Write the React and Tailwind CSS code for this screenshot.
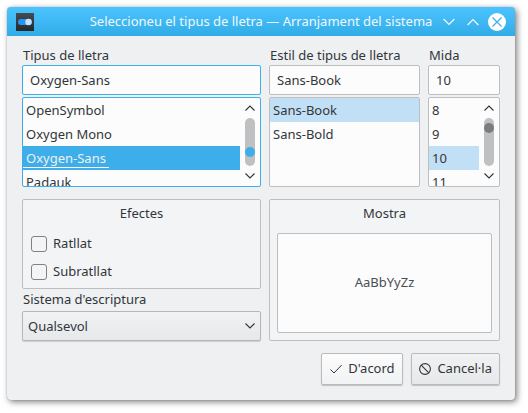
import { useState } from 'react';

function Chevron({ up = false, className = 'h-1.5 w-2.5' }) {
  return (
    <svg viewBox="0 0 10 6" className={className} fill="none" stroke="currentColor" aria-hidden="true">
      <path d={up ? 'M0.5 5.5 L5 1 L9.5 5.5' : 'M0.5 0.5 L5 5 L9.5 0.5'} strokeWidth="1.1" />
    </svg>
  );
}

function ScrollBar({ children }) {
  return (
    <div className="flex w-5 shrink-0 flex-col items-center justify-between py-[7px] text-[#31363b]" aria-hidden="true">
      <Chevron up />
      <div className="flex h-12 w-2.5 flex-col rounded-full bg-[#bfc0c1]">{children}</div>
      <Chevron />
    </div>
  );
}

function FontList({ label, items, selected, onSelect, focused = false, scroll }) {
  const highlight = focused ? 'bg-[#3daee9] text-[#eff0f1]' : 'bg-[#c2e0f5]';
  return (
    <div className={`mt-0.5 flex h-[90px] overflow-hidden rounded-xs border bg-[#fcfcfc] ${focused ? 'border-[#3daee9]' : 'border-[#bcbebf]'}`}>
      <ul role="listbox" aria-label={label} className="min-w-0 flex-1 overflow-hidden">
        {items.map((item) => (
          <li
            key={item}
            role="option"
            aria-selected={item === selected}
            onClick={() => onSelect(item)}
            className={`h-6 leading-6 ${item === selected ? highlight : ''}`}
          >
            <span className={`inline-block h-[22px] pr-[3px] pl-[3px] align-top ${focused && item === selected ? 'border-b border-[#fcfcfc]' : ''}`}>
              {item}
            </span>
          </li>
        ))}
      </ul>
      {scroll}
    </div>
  );
}

function Field({ id, label, value, onChange, focused = false, children }) {
  return (
    <div className="min-w-0">
      <label htmlFor={id} className="block h-[19px] pl-px leading-[19px]">{label}</label>
      <input
        id={id}
        value={value}
        onChange={(e) => onChange(e.target.value)}
        className={`block h-[30px] w-full rounded-xs border bg-[#fcfcfc] px-[7px] outline-none ${focused ? 'border-[#3daee9]' : 'border-[#bcbebf]'}`}
      />
      {children}
    </div>
  );
}

function Effect({ label }) {
  return (
    <label className="flex h-5 items-center gap-1.5">
      <input type="checkbox" className="size-4 appearance-none rounded-[3px] border border-[#7f8284] bg-[#f3f4f6] checked:bg-[#3daee9]" />
      {label}
    </label>
  );
}

export default function App() {
  const [family, setFamily] = useState('Oxygen-Sans');
  const [style, setStyle] = useState('Sans-Book');
  const [size, setSize] = useState('10');

  return (
    <div className="bg-white pt-[7px] pr-[13px] pb-[13px] pl-[7px] font-['Noto_Sans',sans-serif] text-[13px] text-[#31363b]">
      <main className="rounded-[4px] bg-[#eff0f1] shadow-[2px_2px_6px_rgba(0,0,0,0.5),0_0_1px_rgba(0,0,0,0.4)]">
        <header className="grid h-[29px] grid-cols-[66px_1fr_66px] items-center rounded-t-[4px] bg-linear-to-b from-[#4bc3ff] to-[#31ace6] px-[9px] text-[#eff8fd]">
          <svg viewBox="0 0 18 18" className="size-[18px]" aria-hidden="true">
            <defs>
              <linearGradient id="tile" x1="0" y1="0" x2="0" y2="1">
                <stop offset="0" stopColor="#454c52" />
                <stop offset="1" stopColor="#24282c" />
              </linearGradient>
            </defs>
            <rect width="18" height="18" rx="0.5" fill="url(#tile)" />
            <rect x="2" y="6" width="14" height="6" rx="3" fill="#2196f3" />
            <circle cx="12.5" cy="9" r="3.2" fill="#c5e4fa" />
          </svg>
          <h1 className="text-center whitespace-nowrap">Seleccioneu el tipus de lletra — Arranjament del sistema</h1>
          <div className="flex gap-1.5">
            <button aria-label="Minimitza" className="flex size-[18px] items-center justify-center"><Chevron className="h-2 w-3" /></button>
            <button aria-label="Maximitza" className="flex size-[18px] items-center justify-center"><Chevron up className="h-2 w-3" /></button>
            <button aria-label="Tanca" className="flex size-[18px] items-center justify-center rounded-full bg-white text-[#3daee9]">
              <svg viewBox="0 0 18 18" className="size-[18px]" stroke="currentColor" strokeWidth="1.2" aria-hidden="true">
                <path d="M4.5 4.5 L13.5 13.5 M13.5 4.5 L4.5 13.5" />
              </svg>
            </button>
          </div>
        </header>

        <div className="px-[15px] pt-2.5 pb-[15px]">
          <div className="grid grid-cols-[239fr_151fr_72fr] gap-x-2 gap-y-3">
            <Field id="family" label="Tipus de lletra" value={family} onChange={setFamily} focused>
              <FontList
                label="Tipus de lletra"
                items={['OpenSymbol', 'Oxygen Mono', 'Oxygen-Sans', 'Padauk']}
                selected={family}
                onSelect={setFamily}
                focused
                scroll={<ScrollBar><span className="mt-[29px] size-2.5 rounded-full bg-[#3daee9]" /></ScrollBar>}
              />
            </Field>
            <Field id="style" label="Estil de tipus de lletra" value={style} onChange={setStyle}>
              <FontList label="Estil de tipus de lletra" items={['Sans-Book', 'Sans-Bold']} selected={style} onSelect={setStyle} />
            </Field>
            <Field id="size" label="Mida" value={size} onChange={setSize}>
              <FontList
                label="Mida"
                items={['8', '9', '10', '11']}
                selected={size}
                onSelect={setSize}
                scroll={<ScrollBar><span className="mt-[5px] size-2.5 rounded-full bg-[#7a7c7f]" /></ScrollBar>}
              />
            </Field>

            <div>
              <section className="rounded-xs border border-[#bcbebf] bg-[#f3f4f6] px-2 pt-1 pb-1.5">
                <h2 className="text-center leading-[19px]">Efectes</h2>
                <div className="mt-[11px] flex flex-col gap-2">
                  <Effect label="Ratllat" />
                  <Effect label="Subratllat" />
                </div>
              </section>
              <label htmlFor="script" className="mt-px mb-0.5 block h-[19px] pl-px leading-[19px]">Sistema d'escriptura</label>
              <div className="relative">
                <select
                  id="script"
                  className="block h-[30px] w-full appearance-none rounded-xs border border-[#b4b6b8] bg-linear-to-b from-[#f1f2f3] to-[#e7e8ea] pt-0.5 pr-6 pl-[5px] shadow-[0_1px_1px_rgba(0,0,0,0.15)]"
                >
                  <option>Qualsevol</option>
                </select>
                <Chevron className="pointer-events-none absolute top-3 right-1.5 h-1.5 w-2.5" />
              </div>
            </div>

            <section className="col-span-2 flex flex-col rounded-xs border border-[#bcbebf] bg-[#f3f4f6] px-[7px] pt-1 pb-[7px]">
              <h2 className="text-center leading-[19px]">Mostra</h2>
              <input
                aria-label="Mostra"
                defaultValue="AaBbYyZz"
                className="mt-2.5 w-full flex-1 rounded-xs border border-[#bcbebf] bg-[#fcfcfc] text-center text-[#4a4e52] outline-none"
              />
            </section>
          </div>

          <footer className="mt-3 flex justify-end gap-2">
            <button className="flex h-8 min-w-[82px] items-center justify-center gap-1.5 rounded-xs border border-[#b9bbbd] bg-linear-to-b from-[#fcfcfc] to-[#f1f2f3] px-[7px] shadow-[0_1px_1px_rgba(0,0,0,0.2)]">
              <svg viewBox="0 0 12 12" className="size-3" fill="none" stroke="currentColor" aria-hidden="true">
                <path d="M0.5 6.5 L4 10 L11.7 2" />
              </svg>
              D'acord
            </button>
            <button className="flex h-8 min-w-[82px] items-center justify-center gap-1.5 rounded-xs border border-[#b9bbbd] bg-linear-to-b from-[#f1f2f3] to-[#e7e8ea] px-[7px] shadow-[0_1px_1px_rgba(0,0,0,0.2)]">
              <svg viewBox="0 0 12 12" className="size-3" fill="none" stroke="currentColor" strokeWidth="1.1" aria-hidden="true">
                <circle cx="6" cy="6" r="5.4" />
                <path d="M2.2 2.2 L9.8 9.8" />
              </svg>
              Cancel·la
            </button>
          </footer>
        </div>
      </main>
    </div>
  );
}
